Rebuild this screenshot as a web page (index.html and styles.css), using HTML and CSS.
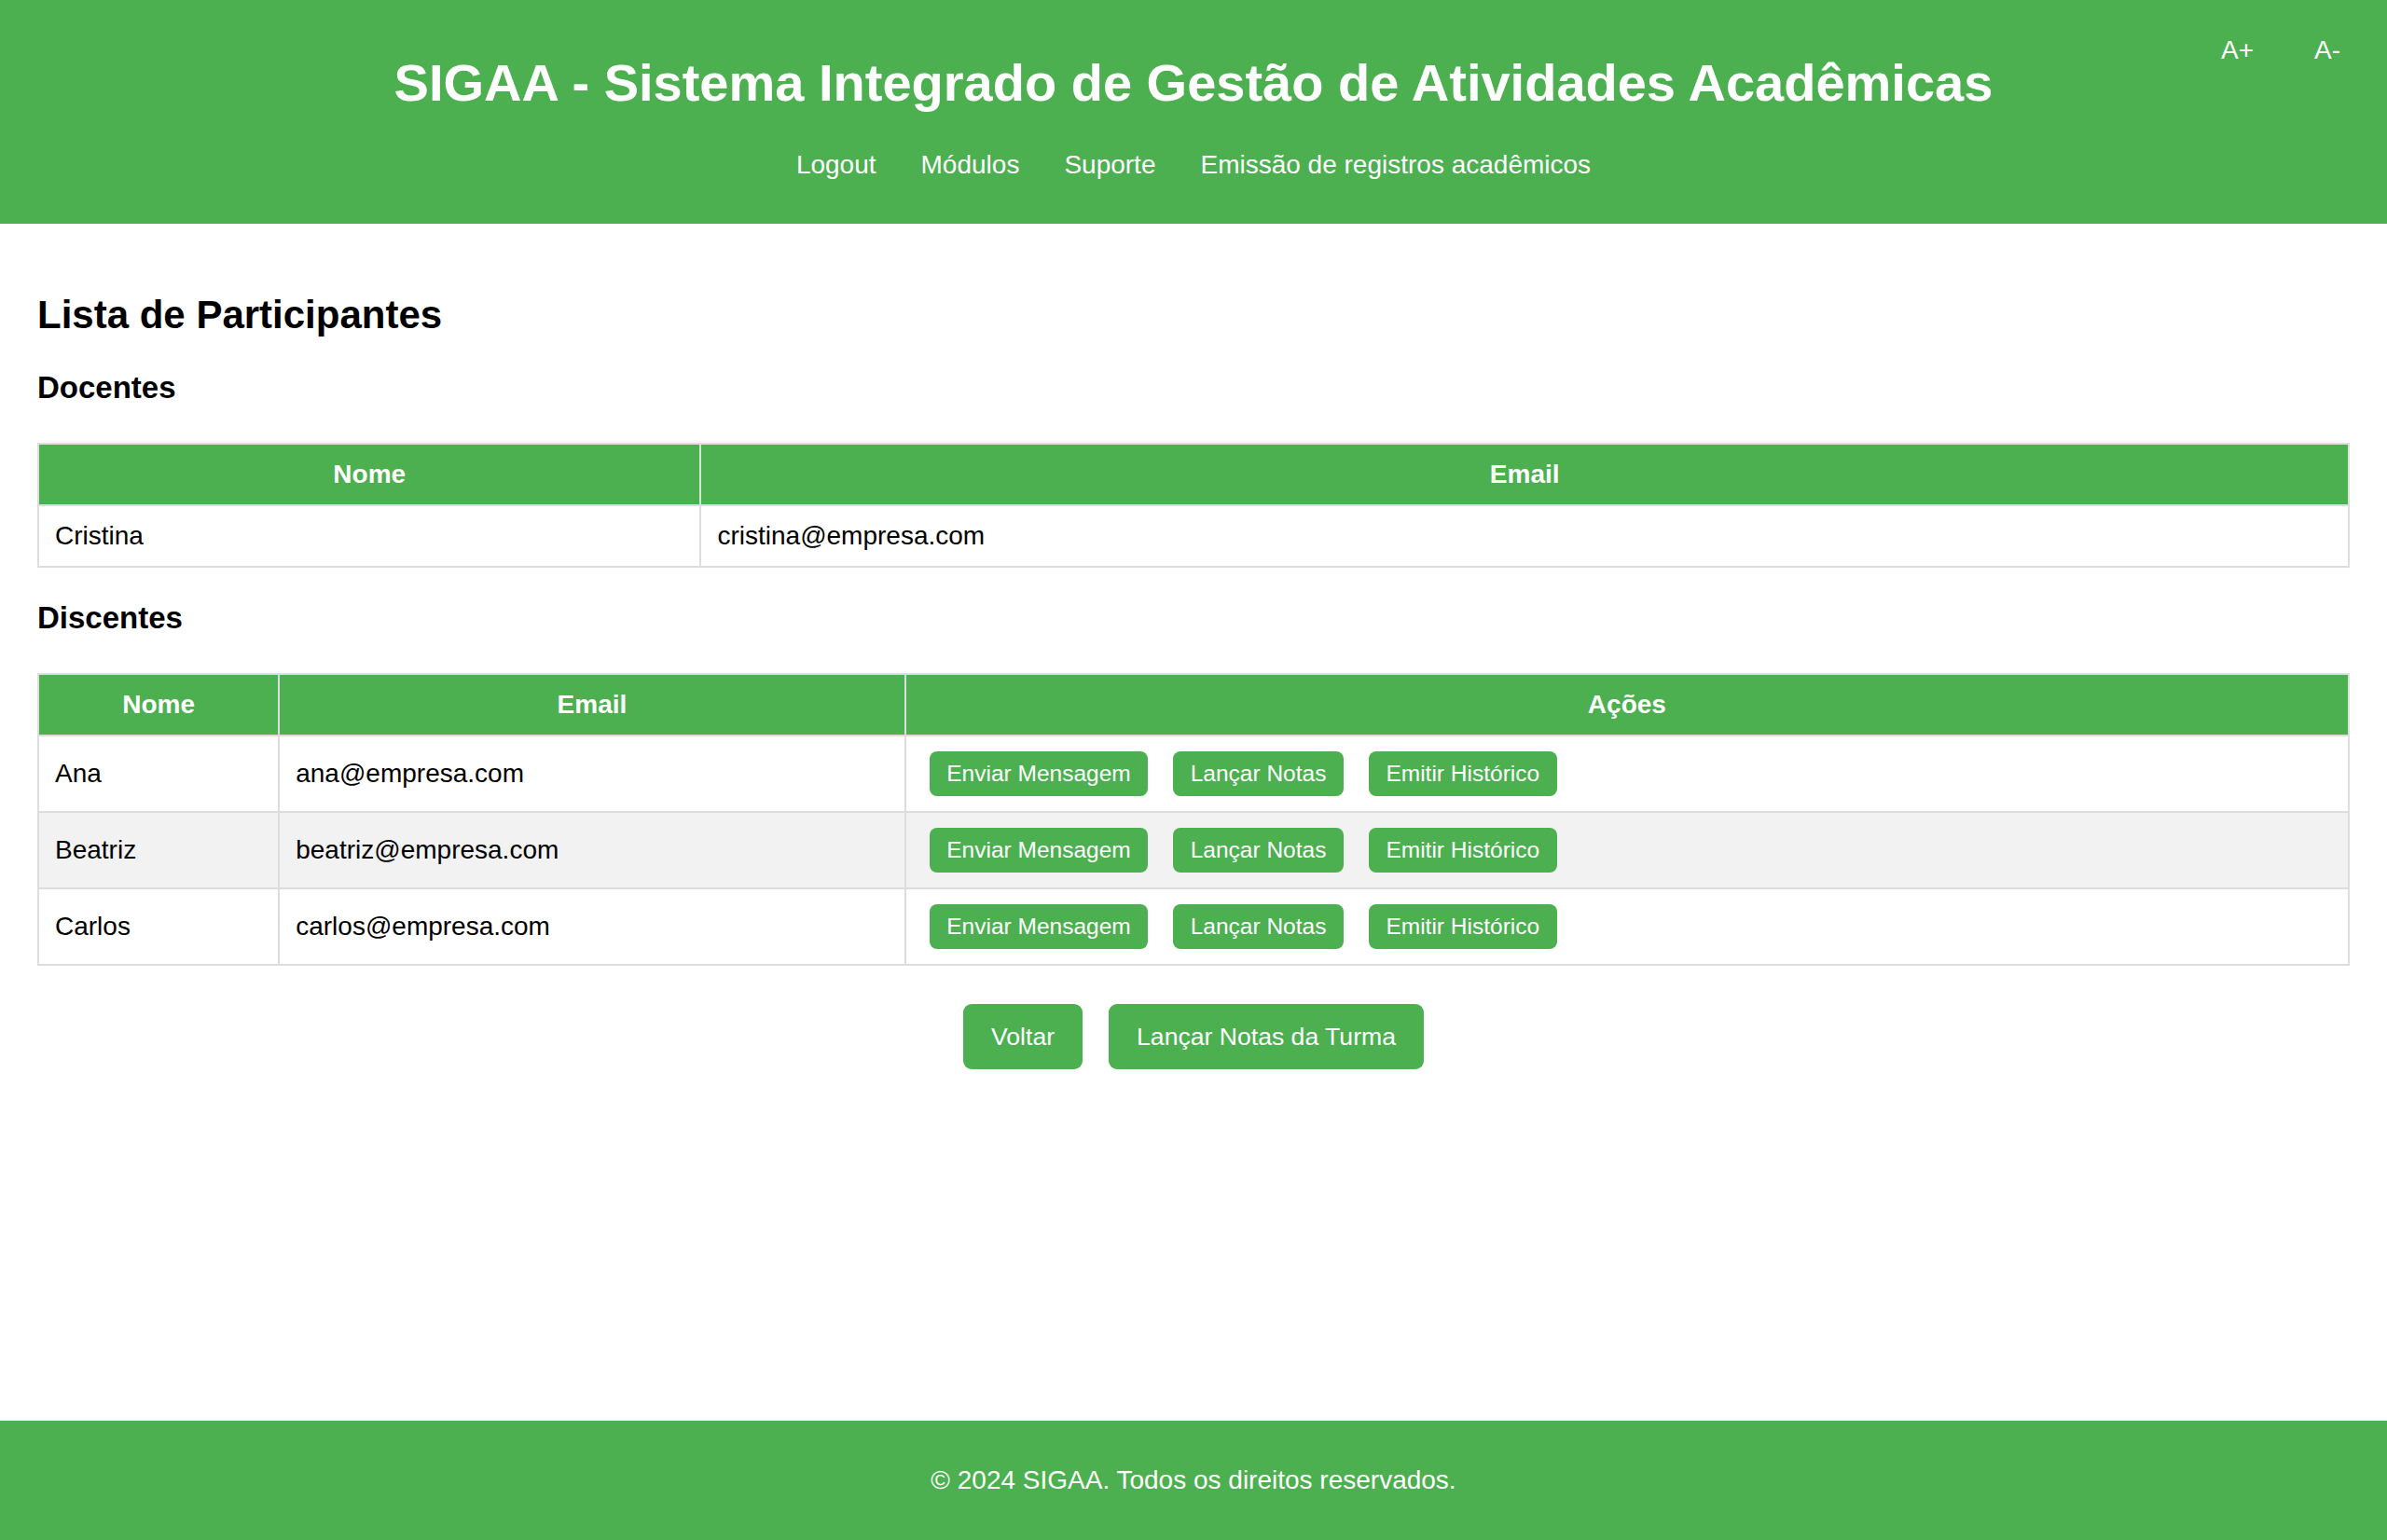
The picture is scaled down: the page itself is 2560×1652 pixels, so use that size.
FILE: index.html
```html
<!DOCTYPE html>
<html lang="pt-BR">
<head>
<meta charset="UTF-8">
<title>SIGAA - Lista de Participantes</title>
<link rel="stylesheet" href="styles.css">
</head>
<body>
<header class="site-header">
  <h1 class="site-title">SIGAA - Sistema Integrado de Gestão de Atividades Acadêmicas</h1>
  <nav class="main-nav">
    <a href="#">Logout</a>
    <a href="#">Módulos</a>
    <a href="#">Suporte</a>
    <a href="#">Emissão de registros acadêmicos</a>
  </nav>
  <div class="font-controls">
    <button class="font-btn" type="button">A+</button>
    <button class="font-btn" type="button">A-</button>
  </div>
</header>

<main class="content">
  <h2 class="page-title">Lista de Participantes</h2>

  <h3 class="section-title">Docentes</h3>
  <table class="data-table">
    <colgroup>
      <col class="col-doc-nome">
      <col>
    </colgroup>
    <thead>
      <tr><th>Nome</th><th>Email</th></tr>
    </thead>
    <tbody>
      <tr><td>Cristina</td><td>cristina@empresa.com</td></tr>
    </tbody>
  </table>

  <h3 class="section-title">Discentes</h3>
  <table class="data-table">
    <colgroup>
      <col class="col-dis-nome">
      <col class="col-dis-email">
      <col>
    </colgroup>
    <thead>
      <tr><th>Nome</th><th>Email</th><th>Ações</th></tr>
    </thead>
    <tbody>
      <tr>
        <td>Ana</td>
        <td>ana@empresa.com</td>
        <td><div class="row-actions"><button class="btn-sm" type="button">Enviar Mensagem</button><button class="btn-sm" type="button">Lançar Notas</button><button class="btn-sm" type="button">Emitir Histórico</button></div></td>
      </tr>
      <tr>
        <td>Beatriz</td>
        <td>beatriz@empresa.com</td>
        <td><div class="row-actions"><button class="btn-sm" type="button">Enviar Mensagem</button><button class="btn-sm" type="button">Lançar Notas</button><button class="btn-sm" type="button">Emitir Histórico</button></div></td>
      </tr>
      <tr>
        <td>Carlos</td>
        <td>carlos@empresa.com</td>
        <td><div class="row-actions"><button class="btn-sm" type="button">Enviar Mensagem</button><button class="btn-sm" type="button">Lançar Notas</button><button class="btn-sm" type="button">Emitir Histórico</button></div></td>
      </tr>
    </tbody>
  </table>

  <div class="page-actions">
    <button class="btn-lg" type="button">Voltar</button>
    <button class="btn-lg" type="button">Lançar Notas da Turma</button>
  </div>
</main>

<footer class="site-footer">
  <p>© 2024 SIGAA. Todos os direitos reservados.</p>
</footer>
</body>
</html>
```

FILE: styles.css
```css
* {
  box-sizing: border-box;
}

html, body {
  margin: 0;
  padding: 0;
}

body {
  font-family: "Liberation Sans", Arial, sans-serif;
  font-size: 28px;
  color: #000;
  background: #fff;
  min-height: 100vh;
  display: flex;
  flex-direction: column;
}

/* Header */
.site-header {
  position: relative;
  background: #4CAF50;
  color: #fff;
  text-align: center;
  padding: 57px 0 47px;
}

.site-title {
  margin: 0 0 40px;
  font-size: 56px;
  line-height: 64px;
  font-weight: bold;
}

.main-nav {
  display: flex;
  justify-content: center;
  gap: 48px;
  font-size: 28px;
  line-height: 32px;
}

.main-nav a {
  color: #fff;
  text-decoration: none;
}

.font-controls {
  position: absolute;
  top: 38px;
  right: 50px;
  display: flex;
  gap: 65px;
}

.font-btn {
  background: none;
  border: none;
  padding: 0;
  margin: 0;
  color: #fff;
  font-family: inherit;
  font-size: 28px;
  line-height: 32px;
  cursor: pointer;
}

/* Main content */
.content {
  flex: 1;
  padding: 74px 40px 0;
}

.page-title {
  margin: 0;
  font-size: 42px;
  line-height: 48px;
  font-weight: bold;
}

.section-title {
  margin: 35px 0 40px;
  font-size: 33px;
  line-height: 38px;
  font-weight: bold;
}

.data-table {
  width: 100%;
  border-collapse: collapse;
  table-layout: fixed;
}

.col-doc-nome {
  width: 28.67%;
}

.col-dis-nome {
  width: 10.42%;
}

.col-dis-email {
  width: 27.1%;
}

.data-table th,
.data-table td {
  border: 2px solid #ddd;
  padding: 16px 17px;
  line-height: 32px;
  font-size: 28px;
  vertical-align: middle;
}

.data-table th {
  background: #4CAF50;
  color: #fff;
  font-weight: bold;
  text-align: center;
}

.data-table td {
  text-align: left;
}

.data-table tbody tr:nth-child(even) {
  background: #f2f2f2;
}

.row-actions {
  display: flex;
  gap: 27px;
  margin-left: 8px;
}

.btn-sm {
  background: #4CAF50;
  color: #fff;
  border: none;
  border-radius: 8px;
  padding: 10px 18.5px;
  font-family: inherit;
  font-size: 24.5px;
  line-height: 28px;
  cursor: pointer;
}

.page-actions {
  display: flex;
  justify-content: center;
  gap: 28px;
  margin-top: 41px;
}

.btn-lg {
  background: #4CAF50;
  color: #fff;
  border: none;
  border-radius: 9px;
  padding: 20px 30px;
  font-family: inherit;
  font-size: 26.6px;
  line-height: 30px;
  cursor: pointer;
}

/* Footer */
.site-footer {
  background: #4CAF50;
  color: #fff;
  text-align: center;
  padding: 48px 0;
}

.site-footer p {
  margin: 0;
  font-size: 28px;
  line-height: 32px;
}
```
